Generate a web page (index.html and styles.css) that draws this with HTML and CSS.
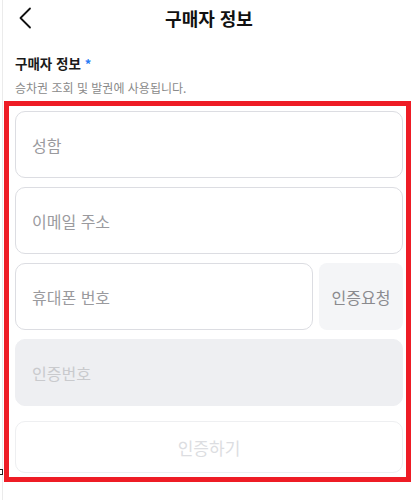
FILE: index.html
```html
<!DOCTYPE html>
<html lang="ko">
<head>
<meta charset="utf-8">
<link rel="stylesheet" href="styles.css">
</head>
<body>
<div class="page">
  <header class="topbar">
    <svg class="back" width="14" height="22" viewBox="0 0 14 22"><path d="M12 1.5 L2.5 11 L12 20.5" fill="none" stroke="#111" stroke-width="1.8" stroke-linecap="round" stroke-linejoin="round"/></svg>
    <h1 class="title">구매자 정보</h1>
  </header>
  <section class="section">
    <div class="label">구매자 정보 <span class="req">*</span></div>
    <div class="desc">승차권 조회 및 발권에 사용됩니다.</div>
  </section>
  <div class="form">
    <div class="field">성함</div>
    <div class="field">이메일 주소</div>
    <div class="row">
      <div class="field grow">휴대폰 번호</div>
      <div class="reqbtn">인증요청</div>
    </div>
    <div class="field disabled">인증번호</div>
    <div class="submit">인증하기</div>
  </div>
  <span class="mark"></span>
</div>
</body>
</html>
```
FILE: styles.css
```css
* { box-sizing: border-box; margin: 0; padding: 0; }
body {
  margin: 0;
  background: #fff;
  font-family: "Noto Sans CJK KR", "Noto Sans", sans-serif;
  color: #111;
}
.page {
  position: relative;
  margin-left: 2px;
  border-left: 1px solid #ebebeb;
  min-height: 500px;
  width: 413px;
}
.topbar {
  position: relative;
  height: 38px;
  display: flex;
  align-items: center;
  justify-content: center;
}
.back {
  position: absolute;
  left: 15px;
  top: 7px;
}
.title {
  font-size: 18px;
  font-weight: 700;
  line-height: 38px;
  margin-top: -2px;
}
.section {
  padding: 15px 0 0 12px;
  height: 63px;
}
.label {
  font-size: 13.5px;
  font-weight: 700;
  line-height: 20px;
  color: #1a1a1a;
}
.req { color: #2a7cf6; font-size: 13px; }
.desc {
  margin-top: 6px;
  font-size: 12px;
  color: #8a8a8a;
  line-height: 16px;
}
.form {
  margin-left: 1px;
  width: 407px;
  border: 5.5px solid #ee1c25;
  padding: 5px 3px 4px 6px;
  display: flex;
  flex-direction: column;
  gap: 9px;
}
.field {
  height: 67px;
  border: 1px solid #dcdde2;
  border-radius: 10px;
  padding-left: 16px;
  display: flex;
  align-items: center;
  font-size: 16px;
  color: #9a9a9e;
}
.row { display: flex; gap: 6px; }
.grow { flex: 1; }
.reqbtn {
  width: 84px;
  height: 67px;
  border-radius: 8px;
  background: #f4f5f7;
  display: flex;
  align-items: center;
  justify-content: center;
  font-size: 16px;
  color: #8a8a8e;
}
.disabled {
  background: #eeeff2;
  border-color: #eeeff2;
  color: #c9cacd;
}
.submit {
  margin-top: 6px;
  height: 52px;
  border: 1px solid #eeeff1;
  border-radius: 10px;
  display: flex;
  align-items: center;
  justify-content: center;
  font-size: 17px;
  color: #dcdde1;
}
.mark {
  position: absolute;
  left: -3px;
  top: 469px;
  width: 3px;
  height: 6px;
  border: 1px solid #222;
  border-left: none;
}
```
